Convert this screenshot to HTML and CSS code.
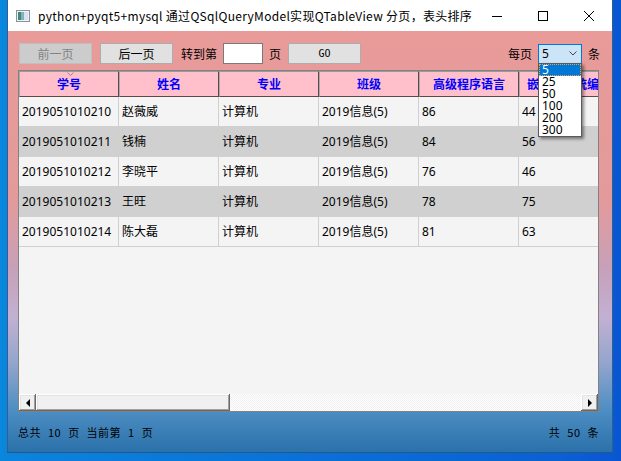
FILE: index.html
```html
<!DOCTYPE html>
<html lang="zh-CN">
<head>
  <meta charset="UTF-8">
  <title>QTableView 分页</title>
  <link rel="stylesheet" href="styles.css">
</head>
<body>

  <div class="window">
    <div class="titlebar">
      <svg class="app-icon" width="14" height="12" viewBox="0 0 14 12">
        <rect x="0.5" y="0.5" width="13" height="11" fill="#eef2f4" stroke="#8a949c"/>
        <rect x="2" y="2" width="3" height="8" fill="#3e8a6a"/>
        <rect x="5" y="2" width="3" height="8" fill="#7fb0d0"/>
        <rect x="8" y="2" width="4" height="8" fill="#d8e2e8"/>
      </svg>
      <span class="title">python+pyqt5+mysql 通过QSqlQueryModel实现QTableView 分页，表头排序</span>
      <div class="caption-btns">
        <span class="cap"><svg width="10" height="10" viewBox="0 0 10 10"><line x1="0" y1="5.5" x2="10" y2="5.5" stroke="#000"/></svg></span>
        <span class="cap"><svg width="10" height="10" viewBox="0 0 10 10"><rect x="0.5" y="0.5" width="9" height="9" fill="none" stroke="#000"/></svg></span>
        <span class="cap"><svg width="10" height="10" viewBox="0 0 10 10"><path d="M0 0 L10 10 M10 0 L0 10" stroke="#000" stroke-width="1"/></svg></span>
      </div>
    </div>

    <div class="client">
      <div class="toolbar">
        <button class="btn" disabled>前一页</button>
        <button class="btn next">后一页</button>
        <span class="lbl goto">转到第</span>
        <input class="page-input" type="text">
        <span class="lbl page">页</span>
        <button class="btn go">GO</button>
        <span class="lbl per">每页</span>
        <div class="combo">
          <span class="combo-value">5</span>
          <svg class="combo-arrow" width="8" height="5" viewBox="0 0 8 5"><polyline points="0.5,0.5 4,4 7.5,0.5" fill="none" stroke="#444"/></svg>
          <ul class="popup">
            <li class="current">5</li>
            <li>25</li>
            <li>50</li>
            <li>100</li>
            <li>200</li>
            <li>300</li>
          </ul>
        </div>
        <span class="lbl tiao">条</span>
      </div>

      <div class="table-view">
        <div class="thead">
          <div class="th sorted">学号
            <svg class="sort-mark" width="7" height="4" viewBox="0 0 7 4"><polyline points="0.5,0.5 3.5,3.5 6.5,0.5" fill="none" stroke="#8c8c8c"/></svg>
          </div>
          <div class="th">姓名</div>
          <div class="th">专业</div>
          <div class="th">班级</div>
          <div class="th">高级程序语言</div>
          <div class="th">嵌入式系统编程</div>
        </div>
        <div class="tbody">
          <div class="tr"><div class="td">2019051010210</div><div class="td">赵薇威</div><div class="td">计算机</div><div class="td">2019信息(5)</div><div class="td">86</div><div class="td">44</div></div>
          <div class="tr alt"><div class="td">2019051010211</div><div class="td">钱楠</div><div class="td">计算机</div><div class="td">2019信息(5)</div><div class="td">84</div><div class="td">56</div></div>
          <div class="tr"><div class="td">2019051010212</div><div class="td">李晓平</div><div class="td">计算机</div><div class="td">2019信息(5)</div><div class="td">76</div><div class="td">46</div></div>
          <div class="tr alt"><div class="td">2019051010213</div><div class="td">王旺</div><div class="td">计算机</div><div class="td">2019信息(5)</div><div class="td">78</div><div class="td">75</div></div>
          <div class="tr"><div class="td">2019051010214</div><div class="td">陈大磊</div><div class="td">计算机</div><div class="td">2019信息(5)</div><div class="td">81</div><div class="td">63</div></div>
        </div>
        <div class="hscroll">
          <span class="sb-btn"><span class="arrow-left"></span></span>
          <span class="sb-thumb"></span>
          <span class="sb-track"></span>
          <span class="sb-btn"><span class="arrow-right"></span></span>
        </div>
      </div>

      <div class="status">
        <span>总共 10 页 当前第 1 页</span>
        <span>共 50 条</span>
      </div>
    </div>
  </div>

</body>
</html>
```

FILE: styles.css
```css
* {
  box-sizing: border-box;
}
html, body {
  margin: 0;
  padding: 0;
  overflow: hidden;
}
body {
  height: 461px;
  font-family: "Noto Sans", "Noto Sans CJK SC", sans-serif;
  font-size: 12px;
  color: #000;
  background: linear-gradient(to right, #0a88de 0, #0a84dc 7px, #0a60d4 90%, #0a56d2 100%);
}

/* window frame */
.window {
  margin-left: 7px;
  width: 606px;
  height: 453px;
  border-left: 1px solid #2f5f90;
  border-right: 1px solid #2f5f90;
  border-bottom: 1px solid #24578c;
}
.titlebar {
  height: 31px;
  background: #fff;
  display: flex;
  align-items: center;
}
.app-icon {
  margin-left: 8px;
}
.title {
  margin-left: 8px;
  font-family: "Noto Sans CJK SC", sans-serif;
  font-size: 12px;
  line-height: 16px;
  letter-spacing: 0.3px;
  color: #000;
  white-space: nowrap;
}
.caption-btns {
  margin-left: auto;
  display: flex;
  height: 31px;
}
.cap {
  width: 46px;
  height: 31px;
  display: flex;
  align-items: center;
  justify-content: center;
}

/* client area */
.client {
  height: 421px;
  display: flex;
  flex-direction: column;
  background: linear-gradient(to bottom, #e89b99 0%, #e49a9b 40%, #c7a0b8 56%, #c2b0d3 68%, #93a5cc 79%, #4d8ec3 90%, #2b71aa 100%);
}
.toolbar {
  margin-top: 12px;
  height: 21px;
  padding: 0 12px 0 11px;
  display: flex;
  align-items: center;
}
.btn {
  width: 73px;
  height: 21px;
  padding: 0;
  border: 1px solid #adadad;
  background: #e1e1e1;
  font-family: "Noto Sans CJK SC", sans-serif;
  font-size: 12px;
  line-height: 18px;
  color: #000;
}
.btn:disabled {
  background: #cccccc;
  border-color: #bfbfbf;
  color: #838383;
}
.btn.next {
  margin-left: 8px;
}
.btn.go {
  margin-left: 7px;
  font-family: "DejaVu Sans Mono", monospace;
  font-size: 10px;
}
.lbl {
  font-family: "Noto Sans CJK SC", sans-serif;
  font-size: 12px;
  line-height: 16px;
}
.goto {
  margin-left: 8px;
}
.page-input {
  margin-left: 6px;
  width: 40px;
  height: 21px;
  border: 1px solid #7a7a7a;
  background: #fff;
  padding: 0;
}
.page {
  margin-left: 6px;
}
.per {
  margin-left: auto;
}
.combo {
  position: relative;
  margin-left: 6px;
  width: 44px;
  height: 20px;
  border: 1px solid #0078d7;
  background: #cce4f7;
  display: flex;
  align-items: center;
}
.combo-value {
  padding-left: 3px;
  font-size: 12px;
  line-height: 16px;
}
.combo-arrow {
  margin-left: auto;
  margin-right: 4px;
}
.tiao {
  margin-left: 6px;
}
.popup {
  position: absolute;
  z-index: 5;
  top: 18px;
  left: -1px;
  width: 44px;
  margin: 0;
  padding: 0;
  list-style: none;
  background: #fff;
  border: 1px solid #5a5a5a;
  box-shadow: 2px 2px 3px rgba(0,0,0,0.45);
}
.popup li {
  height: 12px;
  padding-left: 3px;
  font-size: 12px;
  line-height: 12px;
}
.popup li.current {
  background: #0078d7;
  color: #fff;
  outline: 1px dotted #f0a33c;
  outline-offset: -1px;
}

/* table view */
.table-view {
  margin: 6px 0 0 10px;
  width: 581px;
  height: 342px;
  border: 1px solid #828282;
  background: #f4f4f4;
  display: flex;
  flex-direction: column;
  overflow: hidden;
}
.thead {
  display: flex;
  height: 26px;
  flex: none;
}
.th {
  position: relative;
  flex: none;
  width: 100px;
  height: 26px;
  background: #ffc0cb;
  border-top: 1px solid #9a9a9a;
  border-left: 1px solid #a8a8a8;
  border-right: 1px solid #5e4848;
  border-bottom: 1px solid #5e4848;
  color: #0000ff;
  font-weight: bold;
  font-family: "Noto Sans CJK SC", sans-serif;
  font-size: 12px;
  line-height: 23px;
  text-align: center;
  white-space: nowrap;
}
.sort-mark {
  position: absolute;
  top: 0;
  left: 47px;
}
.tbody {
  flex: 1;
}
.tr {
  display: flex;
  height: 30px;
  border-bottom: 1px solid #d0d0d0;
  background: #f4f4f4;
}
.tr.alt {
  background: #d0d0d0;
}
.td {
  flex: none;
  width: 100px;
  padding: 0 3px;
  border-right: 1px solid #d0d0d0;
  line-height: 29px;
  white-space: nowrap;
}

/* scrollbar */
.hscroll {
  flex: none;
  height: 17px;
  display: flex;
}
.sb-btn, .sb-thumb {
  flex: none;
  height: 17px;
  background: #f0f0f0;
  box-shadow: inset -1px -1px #696969, inset 1px 1px #ffffff, inset -2px -2px #a0a0a0, inset 2px 2px #e3e3e3;
}
.sb-btn {
  width: 17px;
  display: flex;
  align-items: center;
  justify-content: center;
}
.sb-thumb {
  width: 194px;
}
.sb-track {
  flex: 1;
  background: repeating-conic-gradient(#ffffff 0 25%, #f0f0f0 0 50%) 0 0 / 2px 2px;
}
.arrow-left {
  width: 0;
  height: 0;
  border-top: 4px solid transparent;
  border-bottom: 4px solid transparent;
  border-right: 4px solid #000;
}
.arrow-right {
  width: 0;
  height: 0;
  border-top: 4px solid transparent;
  border-bottom: 4px solid transparent;
  border-left: 4px solid #000;
}

/* status line */
.status {
  flex: 1;
  display: flex;
  justify-content: space-between;
  align-items: center;
  padding: 0 13px 0 10px;
  font-family: "Noto Sans CJK SC", sans-serif;
  font-size: 11px;
  line-height: 14px;
  word-spacing: 4px;
  letter-spacing: 0.5px;
  white-space: pre;
}
```
